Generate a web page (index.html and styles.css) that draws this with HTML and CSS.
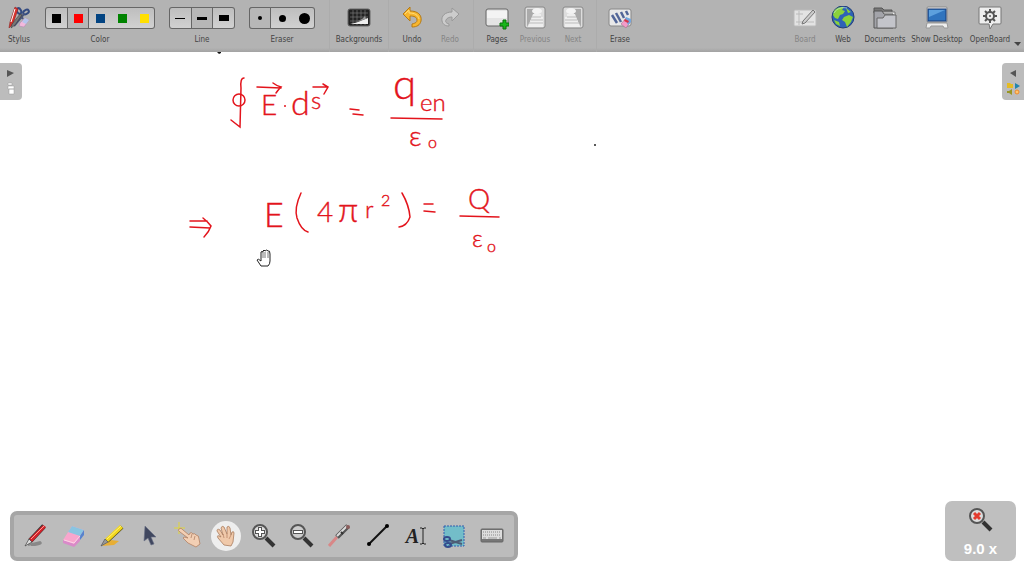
FILE: index.html
```html
<!DOCTYPE html>
<html lang="en">
<head>
    <meta charset="UTF-8">
    <meta name="viewport" content="width=device-width, initial-scale=1.0">
    <title>OpenBoard</title>
    <link rel="stylesheet" href="styles.css">
</head>
<body>
    <header class="toolbar">
        <button class="tool stylus">
            <svg class="icon" width="24" height="24" viewBox="0 0 24 24">
                <ellipse cx="12" cy="5" rx="2" ry="3" fill="none" stroke="#334a80" stroke-width="2" transform="rotate(-30 12 5)"/>
                <ellipse cx="19" cy="6" rx="3" ry="2" fill="none" stroke="#334a80" stroke-width="2" transform="rotate(-30 19 6)"/>
                <path d="M13 8l3 5M17 8L7 20" stroke="#4b5578" stroke-width="2"/>
                <path d="M8 1l3 2-5 15-4 4 1-6z" fill="#d8322d" stroke="#8d2523" stroke-width=".6"/>
                <path d="M8 3L4 16" stroke="#fff" stroke-width="1"/>
                <path d="M13 8l2 1-7 10-4 3 1-4z" fill="#777" stroke="#333" stroke-width=".5"/>
                <path d="M13 17l5-5 4 2-5 7-5-1z" fill="#f2b8dc" stroke="#ac87b0" stroke-width=".5"/>
                <path d="M18 12l4 2-3 4-4-2z" fill="#b4c6ed"/>
            </svg>
            <span>Stylus</span>
        </button>
        <div class="choice color">
            <div class="segments">
                <button aria-label="Black"><i class="swatch black"></i></button>
                <button class="selected" aria-label="Red"><i class="swatch red"></i></button>
                <button aria-label="Blue"><i class="swatch blue"></i></button>
                <button aria-label="Green"><i class="swatch green"></i></button>
                <button aria-label="Yellow"><i class="swatch yellow"></i></button>
            </div>
            <span>Color</span>
        </div>
        <div class="choice">
            <div class="segments">
                <button aria-label="Thin line"><i class="line thin"></i></button>
                <button class="selected" aria-label="Medium line"><i class="line medium"></i></button>
                <button aria-label="Thick line"><i class="line thick"></i></button>
            </div>
            <span>Line</span>
        </div>
        <div class="choice">
            <div class="segments">
                <button class="selected" aria-label="Small eraser"><i class="dot small"></i></button>
                <button aria-label="Medium eraser"><i class="dot middle"></i></button>
                <button aria-label="Large eraser"><i class="dot large"></i></button>
            </div>
            <span>Eraser</span>
        </div>
        <div class="group first">
            <button class="tool wide">
                <svg class="icon" width="24" height="24" viewBox="0 0 24 24">
                    <rect x="1" y="3" width="22" height="17" rx="2" fill="#222" stroke="#666"/>
                    <path d="M3 7h18M3 11h18M3 15h18M6 4v15M10 4v15M14 4v15M18 4v15" stroke="#777" stroke-width=".7"/>
                    <path d="M3 18c7-1 10-3 18-6v6z" fill="#eee"/>
                    <path d="M5 17c6-2 10-3 13-7l1 3z" fill="#999"/>
                </svg>
                <span>Backgrounds</span>
            </button>
        </div>
        <div class="group">
            <button class="tool">
                <svg class="icon" width="24" height="24" viewBox="0 0 24 24">
                    <path d="M3 8l7-7v4c8 0 12 4 11 10-1 4-4 6-9 6v-3c4-1 5-2 5-4 0-3-3-4-7-4v5z" fill="#f8b62d" stroke="#b47a16" stroke-linejoin="round"/>
                    <path d="M5 8l4-4v3c6 0 9 2 10 6" fill="none" stroke="#ffdc79"/>
                </svg>
                <span>Undo</span>
            </button>
            <button class="tool" disabled>
                <svg class="icon" width="24" height="24" viewBox="0 0 24 24">
                    <path d="M21 8l-7-6v4C7 6 3 10 4 15c1 4 4 5 7 5v-2c-3-1-4-2-3-4 1-2 3-3 6-3v4z" fill="#ccc" stroke="#999" stroke-linejoin="round"/>
                </svg>
                <span>Redo</span>
            </button>
        </div>
        <div class="group">
            <button class="tool">
                <svg class="icon" width="24" height="24" viewBox="0 0 24 24">
                    <rect x="1" y="3" width="22" height="17" rx="2" fill="#e4e4e4" stroke="#666"/>
                    <path d="M2 5h20v7H2z" fill="#f3f3f3"/>
                    <path d="M18 14h3v3h3v3h-3v3h-3v-3h-3v-3h3z" fill="#18b51b" stroke="#08720a"/>
                </svg>
                <span>Pages</span>
            </button>
            <button class="tool" disabled>
                <svg class="icon" width="24" height="24" viewBox="0 0 24 24">
                    <rect x="2" y="1" width="20" height="21" rx="2" fill="#ddd" stroke="#888"/>
                    <path d="M4 3h7v5L4 21z" fill="#aaa"/>
                    <path d="M10 8h8v3h2v10H5z" fill="#eee"/>
                    <path d="M9 11h9M8 14h12M6 17h14" stroke="#bbb"/>
                    <ellipse cx="14" cy="5" rx="5" ry="3" fill="#f3f3f3"/>
                </svg>
                <span>Previous</span>
            </button>
            <button class="tool" disabled>
                <svg class="icon" width="24" height="24" viewBox="0 0 24 24">
                    <rect x="2" y="1" width="20" height="21" rx="2" fill="#ddd" stroke="#888"/>
                    <path d="M20 3h-7v5l7 13z" fill="#aaa"/>
                    <path d="M14 8H6v3H4v10h15z" fill="#eee"/>
                    <path d="M15 11H6M16 14H4M18 17H4" stroke="#bbb"/>
                    <ellipse cx="10" cy="5" rx="5" ry="3" fill="#f3f3f3"/>
                </svg>
                <span>Next</span>
            </button>
        </div>
        <div class="group">
            <button class="tool">
                <svg class="icon" width="24" height="24" viewBox="0 0 24 24">
                    <rect x="1" y="3" width="22" height="17" rx="2" fill="#e8e8e8" stroke="#888"/>
                    <path d="M4 9l5 8M8 7l5 9M13 6l3 6M18 5l2 4" stroke="#526698" stroke-width="2.5"/>
                    <path d="M13 18l5-6 5 3-5 7z" fill="#f39bc8" stroke="#a1718e" stroke-width=".6"/>
                    <path d="M17 13l1-2 5 2v3l-3 3z" fill="#72a7df"/>
                    <path d="M17 13l4 2-1 2-4-2z" fill="#d83547"/>
                </svg>
                <span>Erase</span>
            </button>
        </div>
        <nav class="group modes">
            <button class="tool" disabled>
                <svg class="icon" width="24" height="24" viewBox="0 0 24 24">
                    <rect x="1" y="4" width="22" height="16" rx="1" fill="#e3e3e3" stroke="#bbb"/>
                    <path d="M3 8h7M3 16h18M6 5v14" stroke="#bbb"/>
                    <path d="M20 4l2 2L12 17l-3 1 1-3z" fill="#ccc" stroke="#777"/>
                </svg>
                <span>Board</span>
            </button>
            <button class="tool">
                <svg class="icon" width="24" height="24" viewBox="0 0 24 24">
                    <circle cx="12" cy="11" r="11" fill="#2e62b7" stroke="#233e75"/>
                    <path d="M3 5c3-4 7-4 10-4l-2 3 3 1-2 3-3 1-2 4-3-1-2-3zM13 11l5-2 4 2-2 5-4 5-2-5-3-2zM15 2l5 4-3 1zM3 14l5 2 1 4-4-2z" fill="#8bd23b"/>
                    <path d="M3 7c3-5 8-6 13-5" stroke="#c7e5f4" fill="none" opacity=".6"/>
                </svg>
                <span>Web</span>
            </button>
            <button class="tool documents">
                <svg class="icon" width="24" height="24" viewBox="0 0 24 24">
                    <path d="M1 2h8l2 2h8v3H1z" fill="#777" stroke="#555"/>
                    <path d="M2 6h20v12H2z" fill="#eee" stroke="#777"/>
                    <path d="M1 5v17h19V8h-9l-2-3z" fill="#a3a4aa" stroke="#555"/>
                    <path d="M4 22V12h6l2-3h11v13z" fill="#c3c4ca" stroke="#666"/>
                </svg>
                <span>Documents</span>
            </button>
            <button class="tool desktop">
                <svg class="icon" width="24" height="24" viewBox="0 0 24 24">
                    <rect x="2" y="1" width="20" height="15" rx="1" fill="#eee" stroke="#888"/>
                    <rect x="3" y="3" width="18" height="12" fill="#3074be" stroke="#183d78"/>
                    <path d="M4 4h16L4 11z" fill="#5da0dd"/>
                    <path d="M2 17h20l1 5h-4l-1-2H6l-1 2H1z" fill="#eee" stroke="#999"/>
                </svg>
                <span>Show Desktop</span>
            </button>
            <button class="tool openboard">
                <svg class="icon" width="24" height="24" viewBox="0 0 24 24">
                    <path d="M2 1h20q1 0 1 1v15q0 1-1 1h-7l-3 5-1-5H2q-1 0-1-1V2q0-1 1-1z" fill="#eee" stroke="#777"/>
                    <path d="M12 3v14M5 10h14M7 5l10 10M17 5L7 15" stroke="#555" stroke-width="2"/>
                    <circle cx="12" cy="10" r="4" fill="#eee" stroke="#555" stroke-width="2"/>
                    <circle cx="12" cy="10" r="1" fill="#555"/>
                </svg>
                <span>OpenBoard</span>
            </button>
            <svg class="caret" width="7" height="4" viewBox="0 0 7 4"><path d="M0 0h7L4 4z" fill="#444"/></svg>
        </nav>
    </header>

    <main class="board">
        <svg class="ink" role="img" aria-label="Gauss law notes">
            <g transform="translate(0 -52)">
                <path d="M217 52h4v1l-2 1z" fill="#111"/>
                <circle cx="595" cy="145" r="1" fill="#222"/>

                <!-- strokes of the first equation -->
                <g class="stroke">
                    <path d="M244 78q-4 0-3 10l-1 39-9-7"/>
                    <ellipse cx="239" cy="100" rx="6" ry="6"/>
                    <path d="M257 87l24 1M273 83q4 3 8 4-3 3-5 6"/>
                    <path d="M313 87h14M323 84l5 3-4 7"/>
                    <path d="M350 109l9 1M353 114l10 1"/>
                    <path d="M391 118l51 1"/>
                </g>
                <circle cx="285" cy="106" r="1" fill="#e3141c"/>
                <g class="hand">
                    <text x="261" y="115" class="big">E</text>
                    <text x="291" y="115" class="tall">d</text>
                    <text x="311" y="109" class="mid">s</text>
                    <text x="393" y="99" class="huge">q</text>
                    <text x="420" y="111" class="mid">en</text>
                    <text x="409" y="146" class="big">ε</text>
                    <text x="428" y="148" class="small">o</text>
                </g>

                <!-- strokes of the second equation -->
                <g class="stroke">
                    <path d="M190 221h17M190 227l20 1M203 218q5 4 8 8-2 6-7 11"/>
                    <path d="M301 193q-7 15-4 25 4 12 11 14"/>
                    <path d="M402 193q7 12 8 24-3 9-11 10"/>
                    <path d="M424 204h9M424 211l11 1"/>
                    <path d="M460 216l39 1"/>
                </g>
                <g class="hand">
                    <text x="264" y="227" class="tall">E</text>
                    <text x="317" y="222" class="big">4</text>
                    <text x="338" y="222" class="tall">π</text>
                    <text x="365" y="218" class="mid">r</text>
                    <text x="381" y="206" class="small">2</text>
                    <text x="468" y="209" class="big">Q</text>
                    <text x="472" y="247" class="mid">ε</text>
                    <text x="487" y="252" class="small">o</text>
                </g>

                <!-- grab cursor -->
                <path d="M261 266l-4-6q1-2 4 1v-9q1-1 2 0v-1q1-2 2 0 2-2 3 0 2-1 2 3v7q0 3-2 5z" fill="#fff" stroke="#222"/>
                <path d="M263 252v6M265 252v6M268 252v6" stroke="#222" stroke-width=".6"/>
            </g>
        </svg>

        <button class="tab left" aria-label="Show pages">
            <svg width="12" height="28" viewBox="0 0 12 28">
                <path d="M2 2l7 3-7 4z" fill="#555"/>
                <path d="M3 15h4v2H3zM3 18h6v3H3zM4 21h5v5H4z" fill="#fff" stroke="#999" stroke-width=".5"/>
            </svg>
        </button>
        <button class="tab right" aria-label="Show library">
            <svg width="14" height="28" viewBox="0 0 14 28">
                <path d="M10 2L4 5l6 4z" fill="#555"/>
                <path d="M1 15h3l1 1h2v4H1z" fill="#e5bb22"/>
                <path d="M9 15l5 3-5 3z" fill="#2385ad"/>
                <path d="M1 23h2l3-2v6l-3-2H1z" fill="#989622"/>
                <circle cx="11" cy="24" r="2" fill="#ffc56d" stroke="#ef892c"/>
            </svg>
        </button>

        <div class="palette" role="toolbar" aria-label="Stylus palette">
            <button aria-label="Pen">
                <svg width="24" height="24" viewBox="0 0 24 24">
                    <path d="M4 21l12-3q3 2-5 3H7" fill="none" stroke="#888" stroke-width="2"/>
                    <path d="M6 17L20 2" stroke="#333" stroke-width="5"/>
                    <path d="M5 15L19 1l3 2L8 18z" fill="#d5222a"/>
                    <path d="M7 15L20 2" stroke="#ff9b91"/>
                    <path d="M5 15l3 3-7 4z" fill="#ddd" stroke="#444" stroke-width=".7"/>
                </svg>
            </button>
            <button aria-label="Eraser">
                <svg width="24" height="24" viewBox="0 0 24 24">
                    <path d="M1 16L10 2l12 4-10 15z" fill="#f8a6cd"/>
                    <path d="M10 2l12 4-4 6-12-4z" fill="#8ac5e1"/>
                    <path d="M22 6v5l-4 5v-4z" fill="#5783ce"/>
                    <path d="M1 16l11 4 6-8v5l-6 6-11-4z" fill="#d98ac9"/>
                    <path d="M2 16l10 3 6-7" fill="none" stroke="#fcd4e8"/>
                </svg>
            </button>
            <button aria-label="Marker">
                <svg width="24" height="24" viewBox="0 0 24 24">
                    <path d="M2 22l9-6 8 1-5 4z" fill="#e7ae35"/>
                    <path d="M7 17L22 3" stroke="#4a4317" stroke-width="4"/>
                    <path d="M5 15L20 1l3 3L8 18z" fill="#f2d71c"/>
                    <path d="M7 15L21 2" stroke="#fff17b"/>
                    <path d="M5 15l3 3-7 4z" fill="#999" stroke="#555" stroke-width=".7"/>
                </svg>
            </button>
            <button aria-label="Select">
                <svg width="24" height="24" viewBox="0 0 24 24"><path d="M7 2l11 11h-5l3 7-3 1-3-7-4 3z" fill="#40475f" stroke="#697087" stroke-width=".6"/></svg>
            </button>
            <button aria-label="Interact">
                <svg width="28" height="28" viewBox="0 0 28 28">
                    <path d="M5 0v12M0 6h11" stroke="#e0d638"/>
                    <path d="M5 7q2-2 4 1l6 5 1-2q2-1 3 1 2-1 3 1 3 0 3 4l1 5-4 3-8-4-5-5 1-1 4 1-8-6q-3-2-1-3z" fill="#f2cfb4" stroke="#b28163" stroke-width=".8"/>
                    <path d="M18 12l-1 4M21 14l-1 4" stroke="#bd9177"/>
                </svg>
            </button>
            <button class="current" aria-label="Hand" aria-pressed="true">
                <svg width="24" height="24" viewBox="0 0 24 24">
                    <path d="M10 21L4 14q-2-4 3-1L3 7q0-3 3-1l3 5L7 4q1-3 3-1l3 7V3q2-2 3 1l1 7 1-3q2-1 2 1l-1 9-2 4z" fill="#f0c9aa" stroke="#aa7c5e" stroke-width=".8"/>
                    <path d="M9 10l1 4M13 10v4M17 11l-2 4" stroke="#ba8768" stroke-width=".8"/>
                </svg>
            </button>
            <button aria-label="Zoom in">
                <svg width="24" height="24" viewBox="0 0 24 24">
                    <path d="M14 14l8 8" stroke="#333" stroke-width="4"/>
                    <circle cx="8" cy="8" r="7" fill="#ddd" stroke="#555" stroke-width="2"/>
                    <path d="M8 3v10M3 8h10" stroke="#555" stroke-width="4"/>
                    <path d="M8 4v8M4 8h8" stroke="#fff" stroke-width="2"/>
                </svg>
            </button>
            <button aria-label="Zoom out">
                <svg width="24" height="24" viewBox="0 0 24 24">
                    <path d="M14 14l8 8" stroke="#333" stroke-width="4"/>
                    <circle cx="8" cy="8" r="7" fill="#ccc" stroke="#555" stroke-width="2"/>
                    <path d="M3 8h10" stroke="#555" stroke-width="4"/>
                    <path d="M4 8h8" stroke="#fff" stroke-width="2"/>
                </svg>
            </button>
            <button aria-label="Laser pointer">
                <svg width="24" height="24" viewBox="0 0 24 24">
                    <path d="M1 22l8-9" stroke="#d88787" stroke-width="3"/>
                    <path d="M9 13L20 2" stroke="#555" stroke-width="5"/>
                    <path d="M9 12L19 2" stroke="#ddd" stroke-width="2"/>
                    <path d="M13 8l2 2" stroke="#333" stroke-width="2"/>
                    <circle cx="20" cy="3" r="2" fill="#8b5d5b"/>
                </svg>
            </button>
            <button aria-label="Line">
                <svg width="24" height="24" viewBox="0 0 24 24">
                    <path d="M3 20L21 2" stroke="#111" stroke-width="2"/>
                    <circle cx="3" cy="20" r="2"/><circle cx="21" cy="2" r="2"/>
                </svg>
            </button>
            <button class="text-tool" aria-label="Text">
                <span>A</span>
                <svg width="6" height="18" viewBox="0 0 6 18"><path d="M0 1h2l1 1 1-1h2M3 2v14M0 17h2l1-1 1 1h2" fill="none" stroke="#222"/></svg>
            </button>
            <button aria-label="Capture">
                <svg width="24" height="24" viewBox="0 0 24 24">
                    <rect x="2" y="2" width="20" height="20" fill="#73bdc9" stroke="#315cae" stroke-dasharray="2 1"/>
                    <path d="M7 16l13 4M7 20l13-4" stroke="#4e5c75" stroke-width="2"/>
                    <ellipse cx="5" cy="15" rx="3" ry="2" fill="none" stroke="#344b8c" stroke-width="2"/>
                    <ellipse cx="6" cy="21" rx="3" ry="2" fill="none" stroke="#344b8c" stroke-width="2"/>
                </svg>
            </button>
            <button aria-label="Keyboard">
                <svg width="24" height="24" viewBox="0 0 24 24">
                    <rect x="1" y="5" width="22" height="13" rx="1" fill="#777" stroke="#666"/>
                    <rect x="2" y="6" width="20" height="9" fill="#ddd"/>
                    <path d="M3 8h18M3 11h18" stroke="#888" stroke-dasharray="1 1"/>
                    <path d="M3 14h3M8 14h9M19 14h2" stroke="#999"/>
                </svg>
            </button>
        </div>

        <button class="zoom-level">
            <svg width="24" height="24" viewBox="0 0 24 24">
                <path d="M14 14l8 8" stroke="#333" stroke-width="4"/>
                <circle cx="8" cy="8" r="7" fill="#ddd" stroke="#555" stroke-width="2"/>
                <path d="M5 5l6 6M11 5l-6 6" stroke="#e33b2e" stroke-width="3"/>
            </svg>
            <span>9.0 x</span>
        </button>
    </main>
</body>
</html>
```

FILE: styles.css
```css
* {
    box-sizing: border-box;
}
body {
    display: flex;
    flex-direction: column;
    height: 100vh;
    margin: 0;
    background: #fff;
    font-family: "DejaVu Sans Condensed", "Noto Sans", sans-serif;
    font-size: 8px;
    color: #444;
    overflow: hidden;
}
button {
    display: flex;
    align-items: center;
    justify-content: center;
    padding: 0;
    border: none;
    background: none;
    color: inherit;
    font: inherit;
    cursor: pointer;
}
svg {
    display: block;
    flex: none;
}

/* top toolbar */
.toolbar {
    display: flex;
    height: 52px;
    background: linear-gradient(#b3b3b3 92%, #a3a3a3);
    line-height: 12px;
    white-space: nowrap;
}
.tool {
    flex-direction: column;
    justify-content: flex-start;
    width: 38px;
    padding-top: 6px;
    gap: 4px;
}
.tool:disabled {
    color: #858585;
}
.wide {
    width: 58px;
}
.choice {
    display: flex;
    flex-direction: column;
    align-items: center;
    padding-top: 7px;
    gap: 5px;
    margin-right: 14px;
}
.color {
    margin-left: 7px;
}
.segments {
    display: flex;
    height: 22px;
    border-radius: 3px;
    background: linear-gradient(#bdbdbd, #d2d2d2);
    box-shadow: inset 0 0 0 1px #666;
}
.segments button {
    width: 22px;
}
.segments .selected {
    border: 1px solid #666;
    background: #b7b7b7;
}
.segments .selected:first-child {
    border-radius: 3px 0 0 3px;
}
.swatch {
    width: 9px;
    height: 9px;
}
.black {
    background: #000;
}
.red {
    background: #f00;
}
.blue {
    background: #034482;
}
.green {
    background: #008300;
}
.yellow {
    background: #ffdf00;
}
.line {
    width: 10px;
    background: #000;
}
.thin {
    height: 1px;
}
.medium {
    height: 3px;
}
.thick {
    height: 6px;
}
.dot {
    border-radius: 50%;
    background: #000;
}
.dot.small {
    width: 4px;
    height: 4px;
}
.middle {
    width: 7px;
    height: 7px;
}
.large {
    width: 11px;
    height: 11px;
}
.group {
    display: flex;
    padding: 0 4px;
    border-left: 1px solid #acacac;
}
.first {
    padding: 0;
}
.modes {
    margin-left: auto;
    padding: 0 3px 0 0;
    border: none;
}
.documents {
    width: 46px;
}
.desktop {
    width: 58px;
}
.openboard {
    width: 48px;
}
.caret {
    align-self: flex-end;
    margin-bottom: 6px;
}

/* whiteboard */
.board {
    position: relative;
    flex: 1;
}
.ink {
    width: 100%;
    height: 100%;
}
.stroke {
    fill: none;
    stroke: #e3141c;
    stroke-width: 1.5;
    stroke-linecap: round;
}
.hand {
    fill: #e3141c;
    stroke: #e3141c;
    stroke-width: .4;
    font-family: Lato, sans-serif;
    font-weight: 300;
}
.hand .small {
    font-size: 16px;
}
.hand .mid {
    font-size: 24px;
}
.hand .big {
    font-size: 28px;
}
.hand .tall {
    font-size: 34px;
}
.hand .huge {
    font-size: 42px;
}
.tab {
    position: absolute;
    top: 11px;
    width: 22px;
    height: 37px;
    background: #bcbcbc;
}
.left {
    left: 0;
    border-radius: 0 4px 4px 0;
}
.right {
    right: 0;
    border-radius: 4px 0 0 4px;
}

/* bottom palette */
.palette {
    position: absolute;
    left: 10px;
    bottom: 15px;
    display: flex;
    height: 50px;
    padding: 0 3px;
    border: 4px solid #a6a6a6;
    border-radius: 7px;
    background: #bcbcbc;
}
.palette button {
    width: 38px;
}
.palette .current {
    width: 30px;
    height: 30px;
    margin: 6px 4px;
    border-radius: 50%;
    background: #eee;
}
.palette .text-tool {
    gap: 1px;
    font: italic bold 20px "Liberation Serif", serif;
    color: #222;
}
.zoom-level {
    position: absolute;
    right: 8px;
    bottom: 15px;
    flex-direction: column;
    gap: 8px;
    width: 71px;
    height: 60px;
    padding-top: 3px;
    border-radius: 7px;
    background: #bfbfbf;
    color: #fff;
    font: bold 15px "Liberation Sans", sans-serif;
}
```
